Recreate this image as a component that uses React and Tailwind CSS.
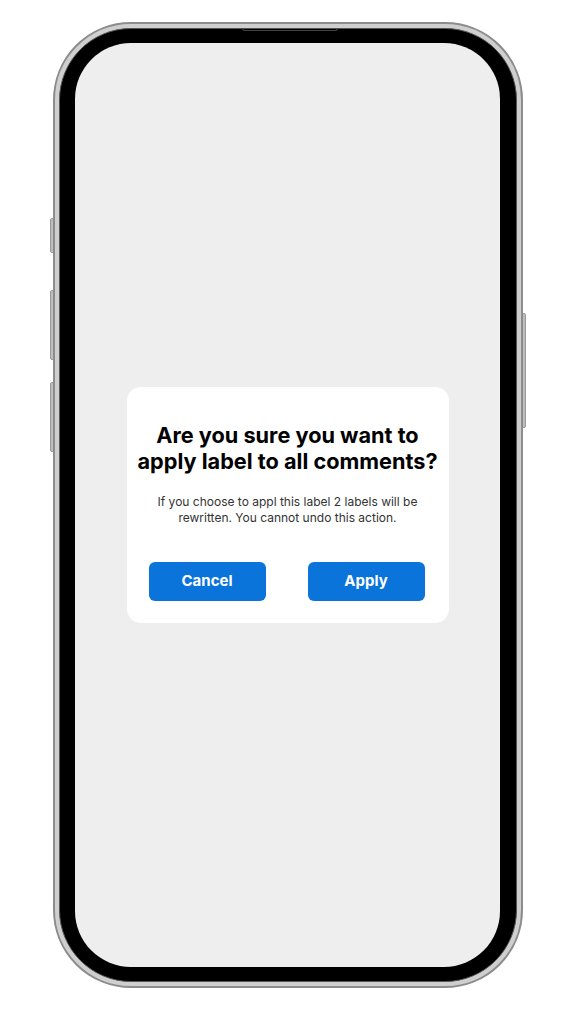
import React from "react";

export default function App() {
  return (
    <div className="w-[574px] h-[1024px] bg-white pt-[22px] pl-[53px]" style={{ fontFamily: "Inter, 'Noto Sans', sans-serif" }}>
      <div className="relative w-[470px] h-[966px]">
        {/* side buttons */}
        <div className="absolute left-[-3px] top-[196px] w-[4px] h-[35px] rounded-l-[2px] bg-[#bdbdbd] border border-[#9a9a9a]" />
        <div className="absolute left-[-3px] top-[268px] w-[4px] h-[70px] rounded-l-[2px] bg-[#bdbdbd] border border-[#9a9a9a]" />
        <div className="absolute left-[-3px] top-[360px] w-[4px] h-[70px] rounded-l-[2px] bg-[#bdbdbd] border border-[#9a9a9a]" />
        <div className="absolute right-[-3px] top-[291px] w-[4px] h-[115px] rounded-r-[2px] bg-[#bdbdbd] border border-[#9a9a9a]" />
        {/* frame */}
        <div className="relative w-full h-full rounded-[78px] bg-[#cfcfcf] border-[2px] border-[#8c8c8c] p-[4px]">
          <div className="w-full h-full rounded-[72px] bg-black border border-[#555] pt-[14px] pb-[14px] pl-[15px] pr-[16px]">
            <div className="w-full h-full rounded-[56px] bg-[#eeeeee] flex items-center justify-center">
              <div className="w-[322px] h-[236px] bg-white rounded-[14px] flex flex-col items-center pt-[35px] px-[10px]">
                <h1 className="whitespace-nowrap text-[21.7px] leading-[26px] font-bold text-black text-center">
                  Are you sure you want to
                  <br />
                  apply label to all comments?
                </h1>
                <p className="whitespace-nowrap mt-[20px] text-[12px] leading-[16px] text-[#333333] text-center">
                  If you choose to appl this label 2 labels will be
                  <br />
                  rewritten. You cannot undo this action.
                </p>
                <div className="mt-[36px] w-full pl-[12px] pr-[14px] flex justify-between">
                  <button className="w-[117px] h-[39px] rounded-[6px] bg-[#0a74da] text-white text-[15px] font-bold">Cancel</button>
                  <button className="w-[117px] h-[39px] rounded-[6px] bg-[#0a74da] text-white text-[15px] font-bold">Apply</button>
                </div>
              </div>
            </div>
          </div>
          {/* notch line */}
          <div className="absolute left-[187px] top-[4px] w-[96px] h-[3px] rounded-b-[3px] border-b border-x border-[#444]" />
        </div>
      </div>
    </div>
  );
}
